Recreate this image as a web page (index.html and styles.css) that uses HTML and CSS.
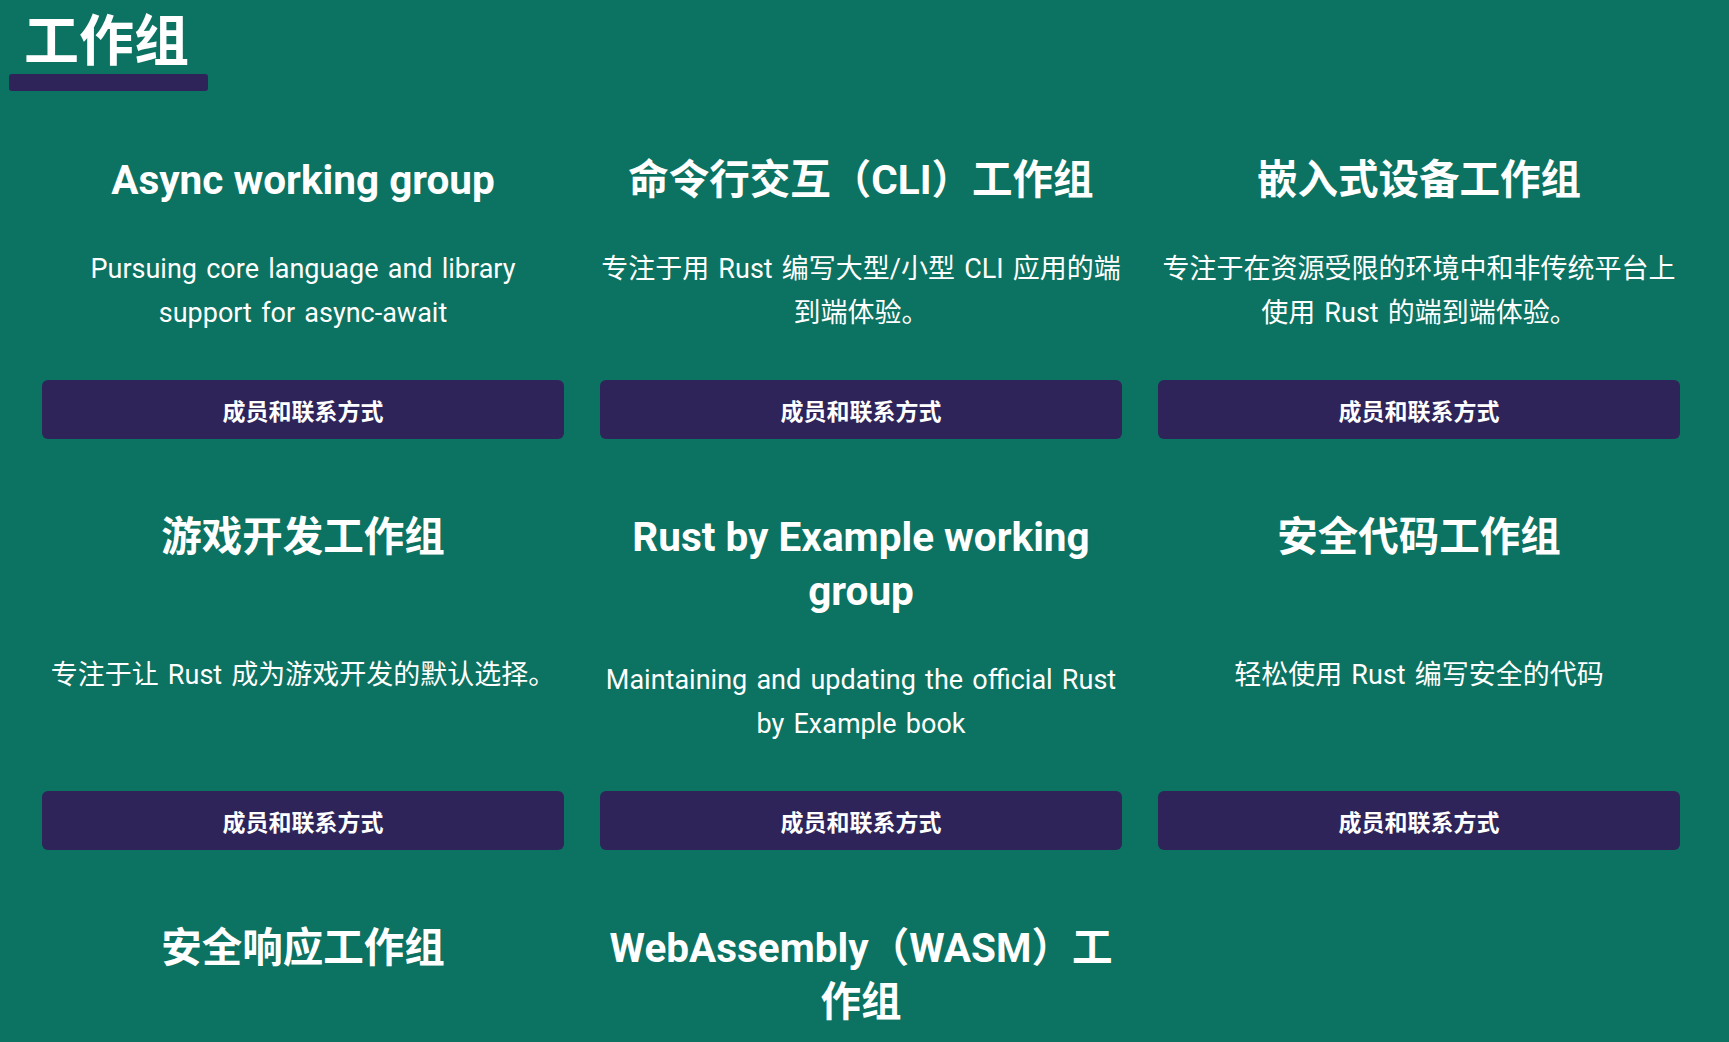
FILE: index.html
```html
<!DOCTYPE html>
<html lang="zh-CN">
<head>
<meta charset="utf-8">
<title>工作组</title>
<link rel="stylesheet" href="styles.css">
</head>
<body>
<section class="wg">
  <header class="wg-header">
    <h2 class="wg-title">工作组</h2>
    <div class="wg-highlight"></div>
  </header>
  <div class="wg-grid">
    <div class="wg-card">
      <h3>Async working group</h3>
      <p>Pursuing core language and library support for async-await</p>
      <a class="wg-button" href="#">成员和联系方式</a>
    </div>
    <div class="wg-card">
      <h3>命令行交互（CLI）工作组</h3>
      <p>专注于用 Rust 编写大型/小型 CLI 应用的端到端体验。</p>
      <a class="wg-button" href="#">成员和联系方式</a>
    </div>
    <div class="wg-card">
      <h3>嵌入式设备工作组</h3>
      <p>专注于在资源受限的环境中和非传统平台上使用 Rust 的端到端体验。</p>
      <a class="wg-button" href="#">成员和联系方式</a>
    </div>
    <div class="wg-card">
      <h3>游戏开发工作组</h3>
      <p>专注于让 Rust 成为游戏开发的默认选择。</p>
      <a class="wg-button" href="#">成员和联系方式</a>
    </div>
    <div class="wg-card">
      <h3>Rust by Example working group</h3>
      <p>Maintaining and updating the official Rust by Example book</p>
      <a class="wg-button" href="#">成员和联系方式</a>
    </div>
    <div class="wg-card">
      <h3>安全代码工作组</h3>
      <p>轻松使用 Rust 编写安全的代码</p>
      <a class="wg-button" href="#">成员和联系方式</a>
    </div>
    <div class="wg-card">
      <h3>安全响应工作组</h3>
      <p>负责响应 Rust 生态系统中的安全问题。</p>
      <a class="wg-button" href="#">成员和联系方式</a>
    </div>
    <div class="wg-card">
      <h3>WebAssembly（WASM）工作组</h3>
      <p>致力于改善在 WebAssembly 中使用 Rust 的端到端体验。</p>
      <a class="wg-button" href="#">成员和联系方式</a>
    </div>
  </div>
</section>
</body>
</html>
```

FILE: styles.css
```css
html,
body {
  margin: 0;
  background: #0c7261;
}

body {
  font-family: Roboto, "Noto Sans CJK SC", sans-serif;
  color: #ffffff;
}

.wg {
  padding: 14px 49px 40px 0;
}

.wg-header {
  display: inline-flex;
  flex-direction: column;
  margin-left: 9px;
}

.wg-title {
  margin: 0;
  padding: 0 19px 0 15px;
  font-size: 55px;
  line-height: 55px;
  font-weight: 700;
}

.wg-highlight {
  height: 17px;
  margin-top: 5px;
  background: #2e2459;
  border-radius: 3px;
}

.wg-grid {
  display: grid;
  grid-template-columns: repeat(3, 522px);
  column-gap: 36px;
  row-gap: 71px;
  margin: 62px 0 0 42px;
}

.wg-card {
  display: flex;
  flex-direction: column;
  justify-content: space-between;
  text-align: center;
}

.wg-card h3 {
  margin: 0 0 40px;
  font-size: 40.5px;
  line-height: 54px;
  font-weight: 700;
}

.wg-card p {
  margin: 0;
  font-size: 27px;
  line-height: 44px;
  word-spacing: 2.5px;
}

.wg-button {
  margin-top: 45px;
  height: 59px;
  display: flex;
  align-items: center;
  justify-content: center;
  background: #2e2459;
  border-radius: 6px;
  color: #ffffff;
  text-decoration: none;
  font-size: 23px;
  font-weight: 700;
}
```
